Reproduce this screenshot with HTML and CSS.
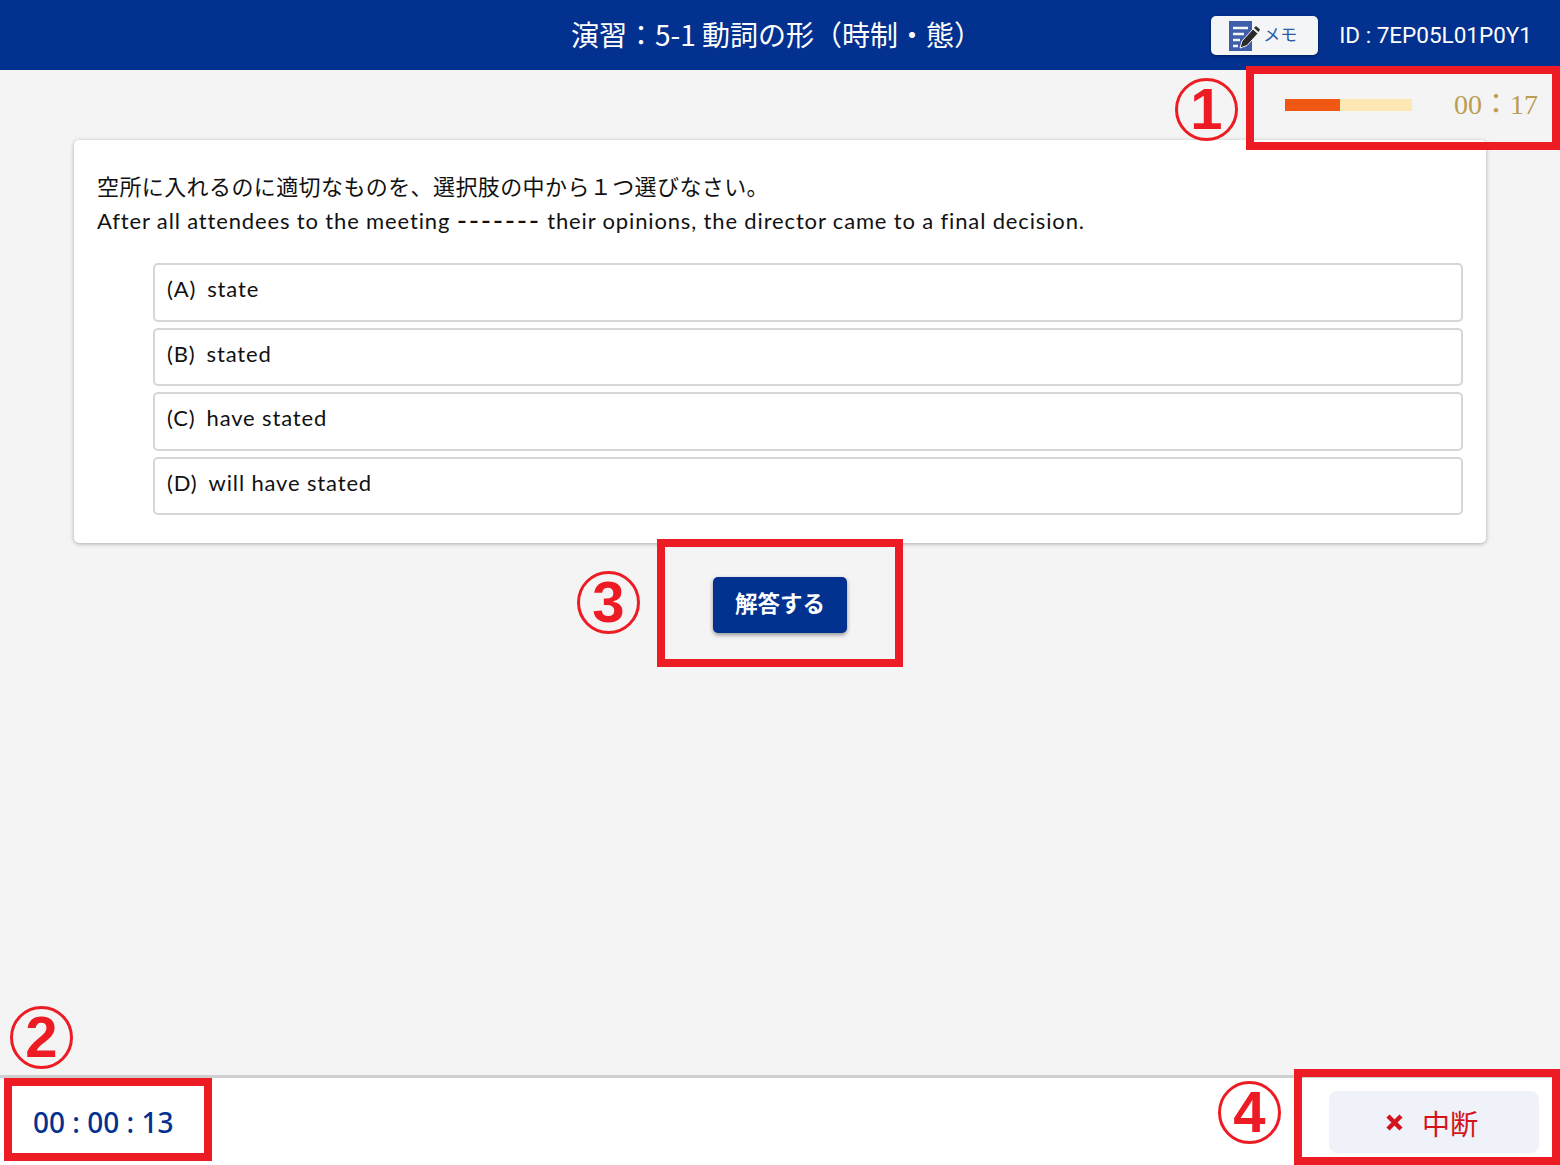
FILE: index.html
```html
<!DOCTYPE html>
<html lang="ja">
<head>
    <meta charset="UTF-8">
    <title>演習：5-1 動詞の形（時制・態）</title>
    <link rel="stylesheet" href="styles.css">
</head>
<body>
    <header class="top-bar">
        <h1 class="top-title">演習：5-1 動詞の形（時制・態）</h1>
        <div class="top-right">
            <button class="memo-btn">
                <svg class="memo-icon" width="32" height="30" viewBox="0 0 32 30">
                    <rect x="0" y="0" width="23" height="30" fill="#3f5ea9"/>
                    <path d="M4 7H19M4 13H15M4 19H11M4 25H9" stroke="#f4f5f7" stroke-width="2.4" fill="none"/>
                    <path d="M11 27L13 20L24 8L29 12.5L18 24.5Z" fill="#2b2b2b" stroke="#f4f5f7" stroke-width="1"/>
                    <path d="M25 7L27 5L31 8.5L29.500 11Z" fill="#2b2b2b"/>
                </svg>
                <span class="memo-label">メモ</span>
            </button>
            <span class="item-id">ID : 7EP05L01P0Y1</span>
        </div>
    </header>

    <main class="content">
        <div class="limit-row">
            <div class="limit-bar"><div class="limit-fill"></div></div>
            <div class="limit-time">00：17</div>
        </div>

        <section class="question-card">
            <p class="question-text">
                <span class="line-ja">空所に入れるのに適切なものを、選択肢の中から１つ選びなさい。</span><br>
                <span class="line-en">After all attendees to the meeting <span class="blank">-------</span> their opinions, the director came to a final decision.</span>
            </p>
            <ul class="choices">
                <li class="choice"><span class="choice-label">(A)</span>state</li>
                <li class="choice"><span class="choice-label">(B)</span>stated</li>
                <li class="choice"><span class="choice-label">(C)</span>have stated</li>
                <li class="choice"><span class="choice-label">(D)</span>will have stated</li>
            </ul>
        </section>

        <div class="answer-row">
            <button class="answer-btn">解答する</button>
        </div>
    </main>

    <footer class="bottom-bar">
        <div class="total-time">00 : 00 : 13</div>
        <button class="stop-btn">
            <svg width="17" height="17" viewBox="0 0 17 17">
                <path d="M2 2L15 15M15 2L2 15" stroke="#d4141c" stroke-width="4.500" fill="none"/>
            </svg>
            <span>中断</span>
        </button>
    </footer>

    <!-- red marks drawn on top of the screenshot -->
    <div class="mark-box box-1"></div>
    <div class="mark-box box-2"></div>
    <div class="mark-box box-3"></div>
    <div class="mark-box box-4"></div>
    <div class="mark-num num-1">1</div>
    <div class="mark-num num-2">2</div>
    <div class="mark-num num-3">3</div>
    <div class="mark-num num-4">4</div>
</body>
</html>
```

FILE: styles.css
```css
* {
    box-sizing: border-box;
}
body {
    margin: 0;
    position: relative;
    min-height: 1165px;
    height: 1165px;
    overflow: hidden;
    display: flex;
    flex-direction: column;
    background: #f4f4f4;
    font-family: "Noto Sans CJK JP", sans-serif;
}
button {
    font-family: inherit;
    border: none;
}

.top-bar {
    height: 70px;
    flex-shrink: 0;
    position: relative;
    display: flex;
    align-items: center;
    justify-content: flex-end;
    padding-right: 28px;
    background: #03318f;
    color: #fff;
}
.top-title {
    position: absolute;
    left: 0;
    top: -1px;
    right: 0;
    margin: 0;
    padding-right: 7px;
    text-align: center;
    font-size: 28px;
    font-weight: 400;
    line-height: 70px;
}
.top-right {
    display: flex;
    align-items: center;
    gap: 21px;
}
.memo-btn {
    width: 107px;
    height: 39px;
    padding: 0 0 0 18px;
    display: flex;
    align-items: center;
    background: #f4f5f7;
    border-radius: 5px;
    box-shadow: 0 1px 3px rgba(0, 0, 0, 0.4);
    color: #2f5aa8;
    font-size: 17px;
}
.memo-icon {
    flex-shrink: 0;
    margin-top: 2px;
    margin-right: 2px;
}
.memo-label {
    margin-bottom: 4px;
}
.item-id {
    font-family: Roboto, sans-serif;
    font-size: 22.5px;
}

.content {
    flex: 1;
    display: flex;
    flex-direction: column;
}
.limit-row {
    height: 70px;
    display: flex;
    align-items: center;
    justify-content: flex-end;
    padding-right: 22px;
}
.limit-bar {
    width: 127px;
    height: 12px;
    margin-right: 42px;
    background: #fde8b4;
}
.limit-fill {
    width: 43%;
    height: 100%;
    background: #ef5713;
}
.limit-time {
    width: 84px;
    margin-bottom: 6px;
    font-family: "Liberation Serif", "Noto Sans CJK JP", serif;
    font-size: 28px;
    color: #bc9d52;
    white-space: nowrap;
}

.question-card {
    margin: 0 74px;
    height: 403px;
    padding: 30px 23px 0;
    background: #fff;
    border-radius: 5px;
    box-shadow: 0 1px 4px rgba(0, 0, 0, 0.3);
}
.question-text {
    margin: 0;
    font-family: Lato, "Noto Sans CJK JP", sans-serif;
    font-size: 22px;
    line-height: 34px;
    color: #111;
}
.line-ja {
    letter-spacing: 0.4px;
}
.line-en {
    letter-spacing: 0.85px;
}
.blank {
    font-size: 28px;
    line-height: 1;
    letter-spacing: 1.6px;
    vertical-align: -2px;
}
.choices {
    list-style: none;
    margin: 25px 0 0 56px;
    padding: 0;
}
.choice {
    height: 58.500px;
    margin-bottom: 6px;
    padding: 8px 12px;
    border: 2px solid #d6d6d6;
    border-radius: 5px;
    font-family: Lato, sans-serif;
    font-size: 22px;
    letter-spacing: 0.85px;
    line-height: 32px;
    color: #111;
}
.choice-label {
    margin-right: 11px;
}

.answer-row {
    display: flex;
    justify-content: center;
    margin-top: 34px;
}
.answer-btn {
    width: 134px;
    height: 56px;
    padding-bottom: 7px;
    background: #03318f;
    border-radius: 5px;
    box-shadow: 0 2px 4px rgba(0, 0, 0, 0.4);
    color: #fff;
    font-size: 22.5px;
    font-weight: 700;
}

.bottom-bar {
    height: 90px;
    flex-shrink: 0;
    display: flex;
    align-items: center;
    justify-content: space-between;
    padding: 0 21px 0 33px;
    background: #fff;
    border-top: 3px solid #cfcfcf;
}
.total-time {
    font-family: "Noto Sans", sans-serif;
    font-size: 28px;
    font-weight: 500;
    color: #03318f;
}
.stop-btn {
    width: 210px;
    height: 62px;
    padding: 2px 4px 0 0;
    display: flex;
    align-items: center;
    justify-content: center;
    gap: 19px;
    background: #eff2f8;
    border-radius: 8px;
    color: #d4141c;
    font-size: 28px;
}

.mark-box {
    position: absolute;
    border: 8px solid #ed1c24;
}
.box-1 {
    left: 1246px;
    top: 66px;
    width: 314px;
    height: 84px;
}
.box-2 {
    left: 4px;
    top: 1078px;
    width: 208px;
    height: 83px;
}
.box-3 {
    left: 657px;
    top: 539px;
    width: 246px;
    height: 128px;
}
.box-4 {
    left: 1294px;
    top: 1069px;
    width: 266px;
    height: 96px;
}
.mark-num {
    position: absolute;
    width: 63px;
    height: 63px;
    border: 3px solid #ed1c24;
    border-radius: 50%;
    text-align: center;
    font-family: "Liberation Sans", sans-serif;
    font-size: 58px;
    font-weight: 700;
    line-height: 56px;
    color: #ed1c24;
}
.num-1 {
    left: 1175px;
    top: 78px;
}
.num-2 {
    left: 10px;
    top: 1006px;
}
.num-3 {
    left: 577px;
    top: 571px;
}
.num-4 {
    left: 1218px;
    top: 1081px;
}
```
